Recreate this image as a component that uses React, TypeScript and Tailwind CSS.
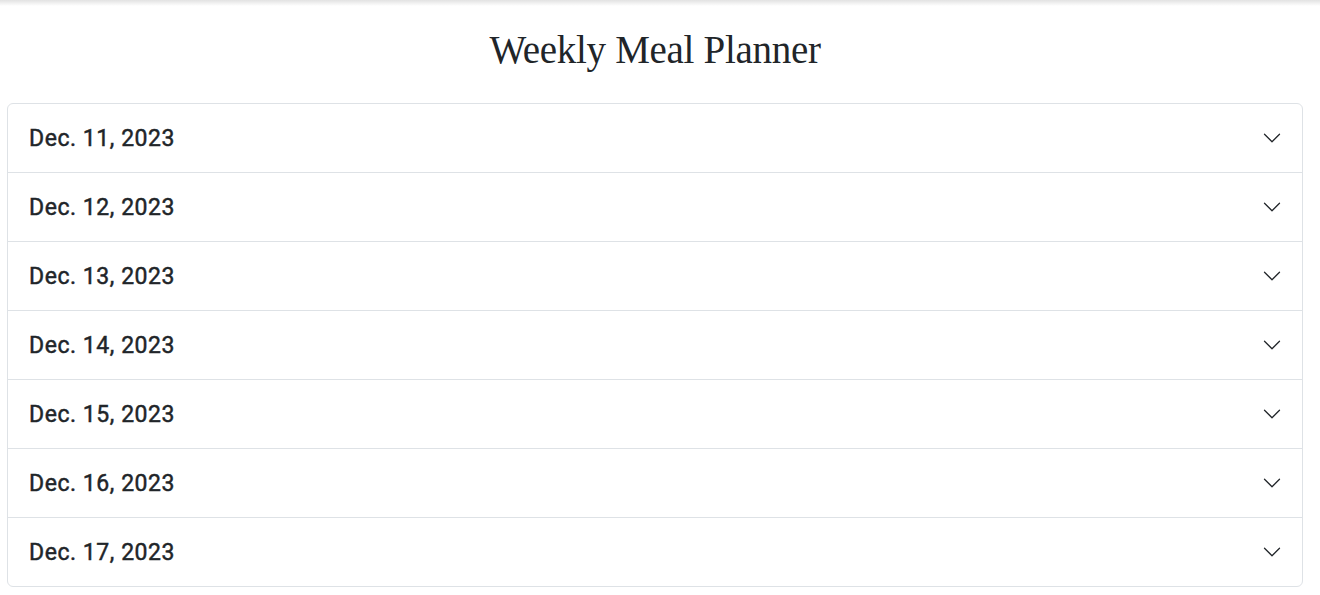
import React from "react";

const days = [
  "Dec. 11, 2023",
  "Dec. 12, 2023",
  "Dec. 13, 2023",
  "Dec. 14, 2023",
  "Dec. 15, 2023",
  "Dec. 16, 2023",
  "Dec. 17, 2023",
];

function Chevron() {
  return (
    <svg width="20" height="20" viewBox="0 0 16 16" fill="none" className="shrink-0">
      <path d="M2 5L8 11L14 5" stroke="#212529" strokeLinecap="round" strokeLinejoin="round" />
    </svg>
  );
}

export default function App() {
  return (
    <div className="min-h-[595px] bg-white text-[#212529]">
      <div className="h-[6px] w-full bg-gradient-to-b from-[#e2e2e2] to-white" />
      <div className="ml-[7px] mr-[17px]">
        <h1
          className="text-center text-[39px] leading-[44px] pt-[22px] pb-[31px] tracking-[-0.3px]"
          style={{ fontFamily: '"Liberation Serif", "DejaVu Serif", serif' }}
        >
          Weekly Meal Planner
        </h1>
        <div className="border border-[#dee2e6] rounded-[6px] overflow-hidden">
          {days.map((d, i) => (
            <div
              key={d}
              className={
                "flex items-center justify-between h-[68px] pl-[21px] pr-[20px] " +
                (i > 0 ? "border-t border-[#dee2e6] h-[69px]" : "")
              }
            >
              <span
                className="pt-[2px] text-[23px] tracking-[0.55px] [-webkit-text-stroke:0.45px_#212529]"
                style={{ fontFamily: "Roboto, 'Noto Sans', sans-serif", fontWeight: 400 }}
              >
                {d}
              </span>
              <Chevron />
            </div>
          ))}
        </div>
      </div>
    </div>
  );
}
